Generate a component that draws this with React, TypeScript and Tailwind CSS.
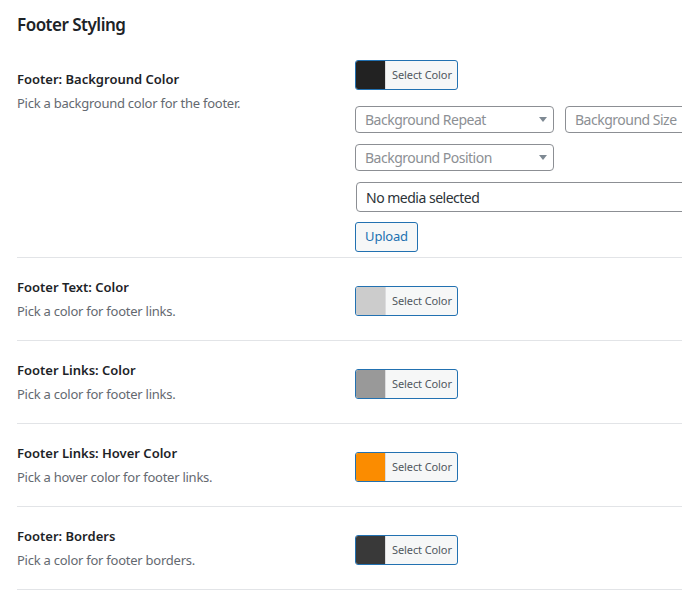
interface ColorRow {
  label: string
  desc: string
  swatch: string
}

const rows: ColorRow[] = [
  { label: 'Footer Text: Color', desc: 'Pick a color for footer links.', swatch: 'bg-[#cccccc]' },
  { label: 'Footer Links: Color', desc: 'Pick a color for footer links.', swatch: 'bg-[#999999]' },
  { label: 'Footer Links: Hover Color', desc: 'Pick a hover color for footer links.', swatch: 'bg-[#fb8c00]' },
  { label: 'Footer: Borders', desc: 'Pick a color for footer borders.', swatch: 'bg-[#393939]' },
]

function ColorButton({ swatch }: { swatch: string }) {
  return (
    <button className="flex h-[30px] w-[103px] items-stretch overflow-hidden rounded-[3px] border border-[#2271b1] bg-[#f6f7f7] p-0 text-left">
      <span className={`w-[30px] shrink-0 border-r border-[#dcdcde] ${swatch}`} />
      <span className="flex items-center pl-[6px] text-[11px] tracking-[-0.1px] text-[#50575e]">Select Color</span>
    </button>
  )
}

function FakeSelect({ text, width, arrow = true }: { text: string; width: string; arrow?: boolean }) {
  return (
    <div className={`flex h-[27px] shrink-0 items-center justify-between rounded-[4px] border border-[#8c8f94] bg-white pl-[9px] pr-[6px] ${width}`}>
      <span className="whitespace-nowrap text-[14px] tracking-[-0.5px] text-[#8c8f94]">{text}</span>
      {arrow && (
        <svg width="8" height="5" viewBox="0 0 8 5" className="shrink-0">
          <path d="M0 0 H8 L4 5 Z" fill="#7e8993" />
        </svg>
      )}
    </div>
  )
}

function Label({ title, desc }: { title: string; desc: string }) {
  return (
    <div className="w-[338px] shrink-0 pt-[20px]">
      <p className="text-[13px] font-semibold leading-[18px] text-[#1d2327]">{title}</p>
      <p className="mt-[6px] text-[13px] leading-[18px] tracking-[-0.25px] text-[#646970]">{desc}</p>
    </div>
  )
}

export default function App() {
  return (
    <div className="min-h-[590px] w-[682px] overflow-hidden bg-white pl-[17px] font-['Noto_Sans',sans-serif]">
      <h2 className="pt-[14px] pb-[14px] text-[17px] font-semibold leading-[22px] tracking-[-0.5px] text-[#1d2327]">Footer Styling</h2>

      {/* Fondo */}
      <div className="flex w-[700px] border-b border-[#e2e4e7]">
        <Label title="Footer: Background Color" desc="Pick a background color for the footer." />
        <div className="flex flex-col pt-[10px] pb-[5px]">
          <ColorButton swatch="bg-[#222222]" />
          <div className="mt-[16px] flex gap-[11px]">
            <FakeSelect text="Background Repeat" width="w-[199px]" />
            <FakeSelect text="Background Size" width="w-[200px]" arrow={false} />
          </div>
          <div className="mt-[11px]">
            <FakeSelect text="Background Position" width="w-[199px]" />
          </div>
          <div className="mt-[11px] ml-[1px] flex h-[30px] w-[400px] items-center rounded-l-[4px] border border-[#8c8f94] pl-[9px] text-[14px] tracking-[-0.5px] text-[#2c3338]">
            No media selected
          </div>
          <div className="mt-[10px]">
            <button className="h-[30px] w-[63px] rounded-[3px] border border-[#2271b1] bg-[#f6f7f7] text-[13px] font-normal tracking-[-0.2px] text-[#2271b1]">
              Upload
            </button>
          </div>
        </div>
      </div>

      {rows.map(r => (
        <div key={r.label} className="flex w-[700px] border-b border-[#e2e4e7]">
          <Label title={r.label} desc={r.desc} />
          <div className="pt-[28px] pb-[24px]">
            <ColorButton swatch={r.swatch} />
          </div>
        </div>
      ))}
    </div>
  )
}
